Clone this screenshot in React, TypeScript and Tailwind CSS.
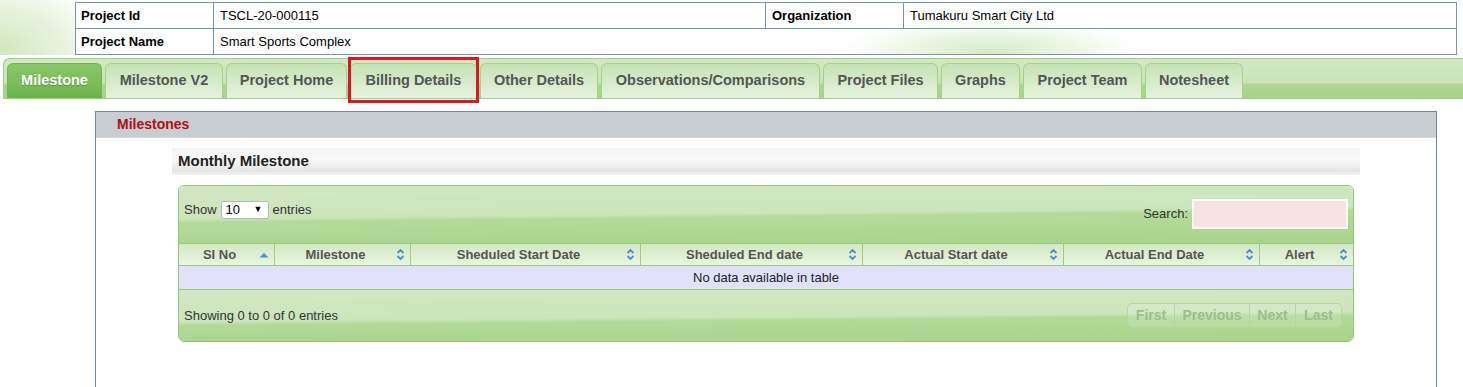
import React from "react";

const tabs = [
  { label: "Milestone", w: "w-[95px]", active: true },
  { label: "Milestone V2", w: "w-[118px]" },
  { label: "Project Home", w: "w-[121px]" },
  { label: "Billing Details", w: "w-[127px]", marked: true },
  { label: "Other Details", w: "w-[118px]" },
  { label: "Observations/Comparisons", w: "w-[219px]" },
  { label: "Project Files", w: "w-[115px]" },
  { label: "Graphs", w: "w-[79px]" },
  { label: "Project Team", w: "w-[119px]" },
  { label: "Notesheet", w: "w-[98px]" },
];

const columns = [
  { label: "SI No", w: "w-[96px]", asc: true },
  { label: "Milestone", w: "w-[136px]" },
  { label: "Sheduled Start Date", w: "w-[230px]" },
  { label: "Sheduled End date", w: "w-[222px]" },
  { label: "Actual Start date", w: "w-[201px]" },
  { label: "Actual End Date", w: "w-[196px]" },
  { label: "Alert", w: "flex-1" },
];

function SortIcon({ asc }: { asc?: boolean }) {
  if (asc) {
    return (
      <svg width="10" height="6" viewBox="0 0 10 6">
        <path d="M0.5 5.5 L5 1 L9.5 5.5Z" fill="#4e8fcc" />
      </svg>
    );
  }
  return (
    <svg width="9" height="13" viewBox="0 0 9 13">
      <path
        d="M1.5 5 L4.5 2 L7.5 5 M1.5 8 L4.5 11 L7.5 8"
        stroke="#4e8fcc"
        strokeWidth="1.8"
        fill="none"
      />
    </svg>
  );
}

export default function App() {
  return (
    <div className="w-full h-[387px] overflow-hidden bg-white font-['Liberation_Sans',Arial,sans-serif]">
      {/* project info */}
      <div className="pt-[2px] pl-[75px] bg-[radial-gradient(ellipse_110px_75px_at_0px_50px,#cfe8be,#e6f3dd_55%,transparent),radial-gradient(ellipse_150px_34px_at_990px_52px,#d5ecc6,transparent)]">
        <table className="w-[1382px] border-collapse border border-[#4f6f8e] text-[13px] text-black">
          <tbody>
            <tr className="h-[26px]">
              <td className="w-[138px] border border-[#7b94ad] bg-white px-[5px] font-bold">Project Id</td>
              <td className="w-[552px] border border-[#7b94ad] bg-white px-[6px]">TSCL-20-000115</td>
              <td className="w-[138px] border border-[#7b94ad] bg-white px-[6px] font-bold">Organization</td>
              <td className="border border-[#7b94ad] px-[6px]">Tumakuru Smart City Ltd</td>
            </tr>
            <tr className="h-[26px]">
              <td className="border border-[#7b94ad] bg-white px-[5px] font-bold">Project Name</td>
              <td colSpan={3} className="border border-[#7b94ad] px-[6px]">Smart Sports Complex</td>
            </tr>
          </tbody>
        </table>
      </div>

      {/* tab strip */}
      <div className="mt-[3px] ml-[3px] h-[41px] rounded-tl-[6px] border border-r-0 border-[#9fd185] bg-[linear-gradient(to_bottom,#d2e8c4_0%,#c9e3b7_62%,#add692_64%,#a8d38b_100%)] pl-[3px] pt-[5px]">
        <div className="flex gap-[3px] h-full items-end">
          {tabs.map((t) => (
            <div
              key={t.label}
              className={
                "relative flex h-[35px] items-center justify-center rounded-t-[6px] border border-b-0 text-[14.5px] font-bold " +
                t.w +
                " " +
                (t.active
                  ? "border-[#74b452] bg-[linear-gradient(to_bottom,#88c566_0%,#7cbd59_55%,#6cb34a_100%)] text-white [text-shadow:0_1px_1px_rgba(0,0,0,0.25)]"
                  : "border-[#a4d38b] bg-[linear-gradient(to_bottom,#c5e2b3_0%,#d6ebc9_50%,#e6f2de_100%)] text-[#555]")
              }
            >
              {t.label}
              {t.marked && (
                <div className="absolute -left-[3px] -top-[7px] w-[131px] h-[46px] border-[3px] border-[#e3141f]" />
              )}
            </div>
          ))}
        </div>
      </div>

      {/* milestones panel */}
      <div className="mt-[12px] ml-[95px] w-[1342px] h-[300px] border border-b-0 border-[#6f8ba7]">
        <div className="h-[26px] bg-[#c8cdd2] border-b border-[#d9dde1] pl-[21px] flex items-center text-[14px] font-bold text-[#b40f0f]">
          Milestones
        </div>

        <div className="mt-[10px] ml-[76px] w-[1188px] h-[27px] bg-[linear-gradient(to_bottom,#f4f4f4_0%,#f9f9f9_40%,#e6e6e6_85%,#f2f2f2_100%)] pl-[6px] flex items-center text-[15px] font-bold text-[#222]">
          Monthly Milestone
        </div>

        {/* data table widget */}
        <div className="mt-[10px] ml-[82px] w-[1176px] rounded-[6px] border border-[#8fc972] overflow-hidden text-[13px] text-[#333]">
          <div className="h-[57px] flex justify-between px-[5px] bg-[linear-gradient(179.4deg,#d2e8c4_0%,#cbe5ba_48%,#b4da9b_53%,#a9d38c_100%)]">
            <div className="flex items-center gap-[4px] h-[21px] mt-[13px]">
              <span>Show</span>
              <div className="w-[48px] h-[18px] bg-white border border-[#b8b8b8] rounded-[2px] flex items-center justify-between pl-[4px] pr-[5px] text-[13px] text-black">
                <span>10</span>
                <span className="text-[9px]">▼</span>
              </div>
              <span>entries</span>
            </div>
            <div className="flex items-center gap-[4px] mt-[13px] h-[30px]">
              <span>Search:</span>
              <div className="w-[156px] h-[30px] bg-[#f6e2e2] border-2 border-[#fbfbfb]" />
            </div>
          </div>

          <div className="flex h-[23px] border-y border-[#95cd79] bg-[linear-gradient(to_bottom,#d1e9c2_0%,#deefd3_55%,#e9f5e2_100%)] text-[13px] font-bold text-[#555]">
            {columns.map((c, i) => (
              <div
                key={c.label}
                className={
                  "relative flex items-center justify-center pr-[14px] " +
                  c.w +
                  (i < columns.length - 1 ? " border-r border-[#9dcf82]" : "")
                }
              >
                {c.label}
                <span className="absolute right-[5px] top-0 h-full flex items-center">
                  <SortIcon asc={c.asc} />
                </span>
              </div>
            ))}
          </div>

          <div className="h-[23px] bg-[#e1e1fd] flex items-center justify-center text-[13px] text-[#222]">
            No data available in table
          </div>

          <div className="h-[52px] flex items-center justify-between pl-[5px] pr-[11px] border-t border-[#95cd79] bg-[linear-gradient(179.5deg,#d2e8c4_0%,#cbe5ba_52%,#b2d999_58%,#a9d38c_100%)]">
            <span className="text-[#333]">Showing 0 to 0 of 0 entries</span>
            <div className="flex h-[25px] rounded-[5px] border border-[#b3d79f] bg-[#ffffff]/15 text-[14px] font-bold text-[#9fbd8f]">
              <span className="w-[47px] flex items-center justify-center border-r border-[#b3d79f]">First</span>
              <span className="w-[75px] flex items-center justify-center border-r border-[#b3d79f]">Previous</span>
              <span className="w-[46px] flex items-center justify-center border-r border-[#b3d79f]">Next</span>
              <span className="w-[45px] flex items-center justify-center">Last</span>
            </div>
          </div>
        </div>
      </div>
    </div>
  );
}
